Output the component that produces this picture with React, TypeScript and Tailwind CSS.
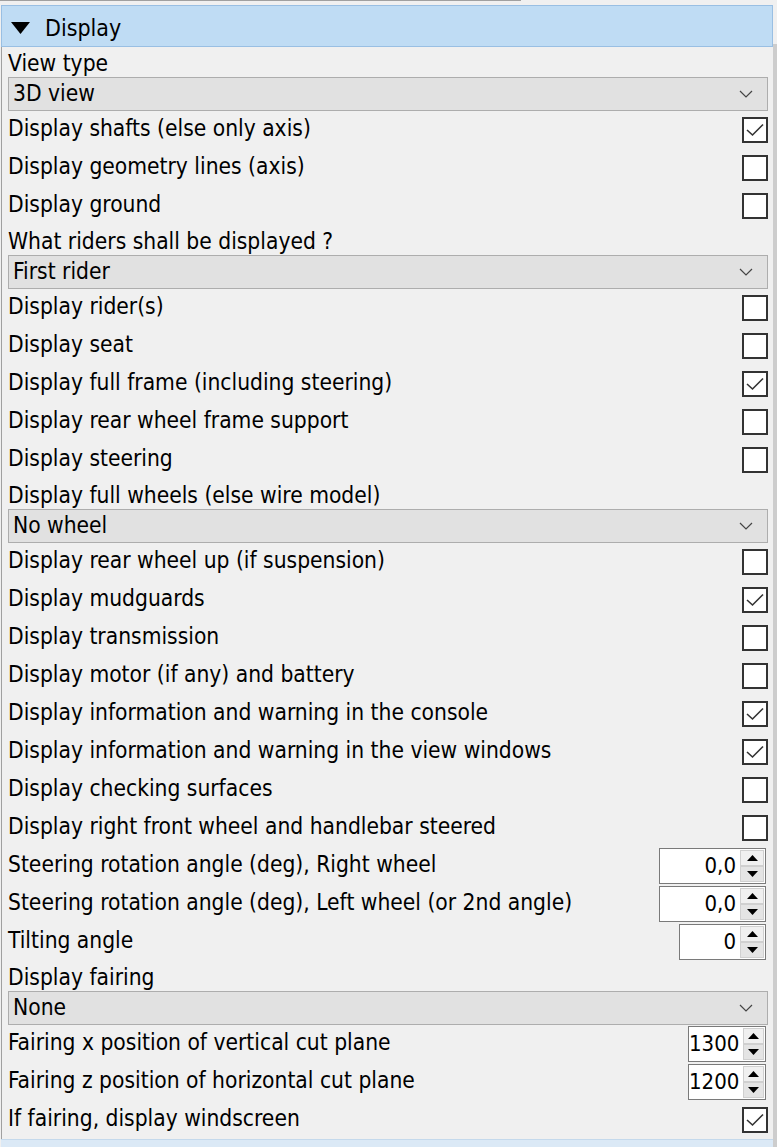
import React from "react";

type Item =
  | { t: "label"; text: string }
  | { t: "combo"; text: string }
  | { t: "check"; text: string; v: boolean }
  | { t: "spin"; text: string; val: string; w: string };

const items: Item[] = [
  { t: "label", text: "View type" },
  { t: "combo", text: "3D view" },
  { t: "check", text: "Display shafts (else only axis)", v: true },
  { t: "check", text: "Display geometry lines (axis)", v: false },
  { t: "check", text: "Display ground", v: false },
  { t: "label", text: "What riders shall be displayed ?" },
  { t: "combo", text: "First rider" },
  { t: "check", text: "Display rider(s)", v: false },
  { t: "check", text: "Display seat", v: false },
  { t: "check", text: "Display full frame (including steering)", v: true },
  { t: "check", text: "Display rear wheel frame support", v: false },
  { t: "check", text: "Display steering", v: false },
  { t: "label", text: "Display full wheels (else wire model)" },
  { t: "combo", text: "No wheel" },
  { t: "check", text: "Display rear wheel up (if suspension)", v: false },
  { t: "check", text: "Display mudguards", v: true },
  { t: "check", text: "Display transmission", v: false },
  { t: "check", text: "Display motor (if any) and battery", v: false },
  { t: "check", text: "Display information and warning in the console", v: true },
  { t: "check", text: "Display information and warning in the view windows", v: true },
  { t: "check", text: "Display checking surfaces", v: false },
  { t: "check", text: "Display right front wheel and handlebar steered", v: false },
  { t: "spin", text: "Steering rotation angle (deg), Right wheel", val: "0,0", w: "w-[107px]" },
  { t: "spin", text: "Steering rotation angle (deg), Left wheel (or 2nd angle)", val: "0,0", w: "w-[107px]" },
  { t: "spin", text: "Tilting angle", val: "0", w: "w-[87px]" },
  { t: "label", text: "Display fairing" },
  { t: "combo", text: "None" },
  { t: "spin", text: "Fairing x position of vertical cut plane", val: "1300", w: "w-[78px]" },
  { t: "spin", text: "Fairing z position of horizontal cut plane", val: "1200", w: "w-[78px]" },
  { t: "check", text: "If fairing, display windscreen", v: true },
];

function Check({ v }: { v: boolean }) {
  return (
    <div className="w-[26px] h-[26px] shrink-0 border-2 border-[#333333] bg-white flex items-center justify-center">
      {v && (
        <svg width="20" height="16" viewBox="0 0 20 16">
          <path d="M2 8 L7.5 13 L18 2.5" fill="none" stroke="#333333" strokeWidth="1.6" />
        </svg>
      )}
    </div>
  );
}

function Chevron() {
  return (
    <svg width="14" height="8" viewBox="0 0 14 8">
      <path d="M1 1 L7 7 L13 1" fill="none" stroke="#444444" strokeWidth="1.2" />
    </svg>
  );
}

function Spin({ val, w }: { val: string; w: string }) {
  return (
    <div className={`${w} h-[36px] shrink-0 border border-[#7a7a7a] bg-white flex`}>
      <div className="flex-1 flex items-center justify-end pr-[4px] text-[22px] leading-none">{val}</div>
      <div className="w-[25px] flex flex-col py-px pr-px">
        <div className="flex-1 bg-[#f0f0f0] border border-[#d0d0d0] flex items-center justify-center">
          <svg width="11" height="6" viewBox="0 0 11 6">
            <path d="M0 6 L5.5 0 L11 6 Z" fill="#000" />
          </svg>
        </div>
        <div className="flex-1 bg-[#e4e4e4] border border-[#d0d0d0] flex items-center justify-center">
          <svg width="11" height="6" viewBox="0 0 11 6">
            <path d="M0 0 L5.5 6 L11 0 Z" fill="#000" />
          </svg>
        </div>
      </div>
    </div>
  );
}

export default function App() {
  return (
    <div
      className="w-[777px] h-[1147px] bg-[#f0f0f0] overflow-hidden text-black text-[22.6px]"
      style={{ fontFamily: '"DejaVu Sans Condensed", "DejaVu Sans", sans-serif' }}
    >
      <div className="h-[5px] relative">
        <div className="w-[521px] h-px bg-[#a0a0a0]" />
      </div>
      <div className="flex">
        <div className="w-[773px] shrink-0 flex flex-col">
          <div className="h-[42px] shrink-0 ml-px bg-[#bfdcf4] border border-[#99bfe3] flex items-center pl-[9px] gap-[15px]">
            <svg width="19" height="12" viewBox="0 0 19 12" className="mt-[3px]">
              <path d="M0 0 L19 0 L9.5 12 Z" fill="#000" />
            </svg>
            <span className="text-[23px] mt-[4px]">Display</span>
          </div>
          <div className="flex flex-col border-l border-[#a0a0a0] ml-px pl-[6px] pr-[5px]">
            {items.map((it, i) => {
              if (it.t === "label")
                return (
                  <div key={i} className="h-[30px] shrink-0 flex items-center whitespace-nowrap pt-[4px]">
                    {it.text}
                  </div>
                );
              if (it.t === "combo")
                return (
                  <div
                    key={i}
                    className="h-[34px] shrink-0 bg-[#e1e1e1] border border-[#adadad] flex items-center justify-between pl-[4px] pr-[14px]"
                  >
                    <span>{it.text}</span>
                    <Chevron />
                  </div>
                );
              if (it.t === "check")
                return (
                  <div key={i} className="h-[38px] shrink-0 flex items-center justify-between whitespace-nowrap">
                    <span className="-mt-[3px]">{it.text}</span>
                    <Check v={it.v} />
                  </div>
                );
              return (
                <div key={i} className="h-[38px] shrink-0 flex items-center justify-between whitespace-nowrap">
                  <span className="-mt-[3px]">{it.text}</span>
                  <div className="mr-[2px]">
                    <Spin val={it.val} w={it.w} />
                  </div>
                </div>
              );
            })}
            <div className="h-[12px] shrink-0 -ml-[7px] -mr-[5px] bg-[#dbe9f6] border-t border-[#c4d9ec]" />
          </div>
        </div>
        <div className="flex-1 flex flex-col">
          <div className="h-[39px]" />
          <div className="flex-1 bg-[#cdcdcd]" />
        </div>
      </div>
    </div>
  );
}
